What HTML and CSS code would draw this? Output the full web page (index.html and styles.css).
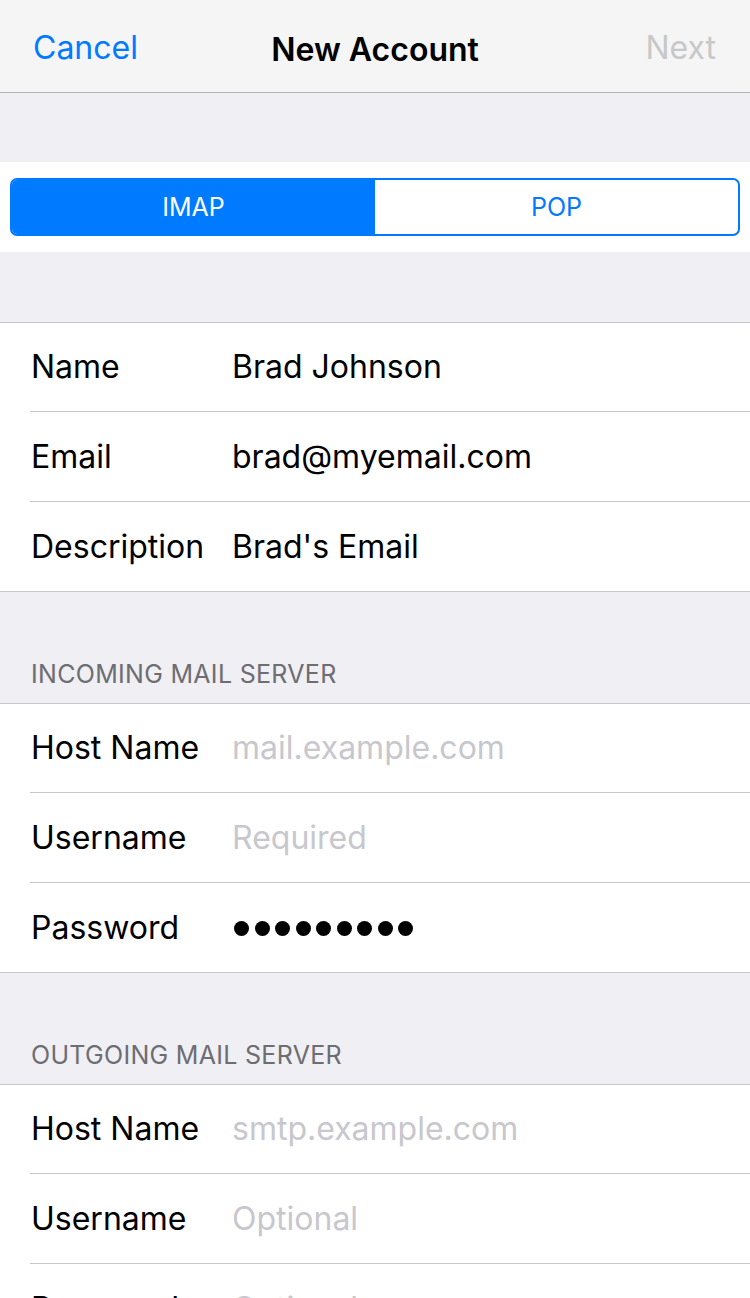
FILE: index.html
```html
<!DOCTYPE html>
<html lang="en">
<head>
    <meta charset="UTF-8">
    <meta name="viewport" content="width=device-width, initial-scale=1.0">
    <title>New Account</title>
    <link rel="stylesheet" href="styles.css">
</head>
<body>
    <div class="navbar">
        <span class="nav-btn cancel">Cancel</span>
        <span class="nav-title">New Account</span>
        <span class="nav-btn next">Next</span>
    </div>

    <div class="spacer top"></div>

    <div class="segment-wrap">
        <div class="segment">
            <div class="seg active">IMAP</div>
            <div class="seg">POP</div>
        </div>
    </div>

    <div class="spacer mid"></div>

    <div class="group">
        <div class="row"><span class="label">Name</span><span class="value">Brad Johnson</span></div>
        <div class="row"><span class="label">Email</span><span class="value">brad@myemail.com</span></div>
        <div class="row"><span class="label">Description</span><span class="value">Brad's Email</span></div>
    </div>

    <div class="section-header">INCOMING MAIL SERVER</div>
    <div class="group">
        <div class="row"><span class="label">Host Name</span><span class="value placeholder">mail.example.com</span></div>
        <div class="row"><span class="label">Username</span><span class="value placeholder">Required</span></div>
        <div class="row">
            <span class="label">Password</span>
            <span class="value dots">
                <i></i><i></i><i></i><i></i><i></i><i></i><i></i><i></i><i></i>
            </span>
        </div>
    </div>

    <div class="section-header">OUTGOING MAIL SERVER</div>
    <div class="group">
        <div class="row"><span class="label">Host Name</span><span class="value placeholder">smtp.example.com</span></div>
        <div class="row"><span class="label">Username</span><span class="value placeholder">Optional</span></div>
        <div class="row"><span class="label">Password</span><span class="value placeholder">Optional</span></div>
    </div>
</body>
</html>
```

FILE: styles.css
```css
body {
    margin: 0;
    font-family: Inter, "Liberation Sans", sans-serif;
    background-color: #efeff4;
    color: #000;
    overflow: hidden;
}
.navbar {
    height: 93px;
    box-sizing: border-box;
    background-color: #f5f5f5;
    border-bottom: 1px solid #b1b1b1;
    display: flex;
    align-items: center;
    justify-content: space-between;
    padding: 3px 34px 0 33px;
    position: relative;
}
.nav-btn {
    font-size: 32px;
}
.cancel {
    color: #007aff;
}
.next {
    color: #c8c8c8;
}
.nav-title {
    position: absolute;
    left: 0;
    right: 0;
    padding-top: 3px;
    text-align: center;
    font-size: 32px;
    font-weight: 600;
    pointer-events: none;
}
.spacer.top {
    height: 69px;
}
.spacer.mid {
    height: 70px;
}
.segment-wrap {
    background-color: #fff;
    height: 90px;
    padding: 16px 10px;
    box-sizing: border-box;
}
.segment {
    display: flex;
    height: 58px;
    border: 2px solid #007aff;
    border-radius: 7px;
    overflow: hidden;
    box-sizing: border-box;
}
.seg {
    flex: 1;
    display: flex;
    align-items: center;
    justify-content: center;
    font-size: 25px;
    color: #007aff;
}
.seg.active {
    background-color: #007aff;
    color: #fff;
}
.group {
    background-color: #fff;
    border-top: 1px solid #c8c7cc;
    border-bottom: 1px solid #c8c7cc;
    padding-left: 30px;
}
.row {
    height: 90px;
    box-sizing: border-box;
    padding-bottom: 1px;
    display: flex;
    align-items: center;
    border-bottom: 1px solid #c8c7cc;
    font-size: 32px;
}
.row:first-child {
    height: 89px;
}
.row:last-child {
    height: 89px;
    border-bottom: none;
}
.label {
    width: 201px;
    padding-left: 1px;
    flex-shrink: 0;
}
.value.placeholder {
    color: #c7c7cd;
}
.dots {
    display: flex;
    gap: 5.5px;
    padding-left: 2px;
    padding-top: 2px;
}
.dots i {
    width: 15px;
    height: 15px;
    border-radius: 50%;
    background-color: #000;
}
.section-header {
    height: 111px;
    box-sizing: border-box;
    padding: 0 0 14px 31px;
    display: flex;
    align-items: flex-end;
    font-size: 25px;
    color: #6d6d72;
    letter-spacing: 0.3px;
}
```
